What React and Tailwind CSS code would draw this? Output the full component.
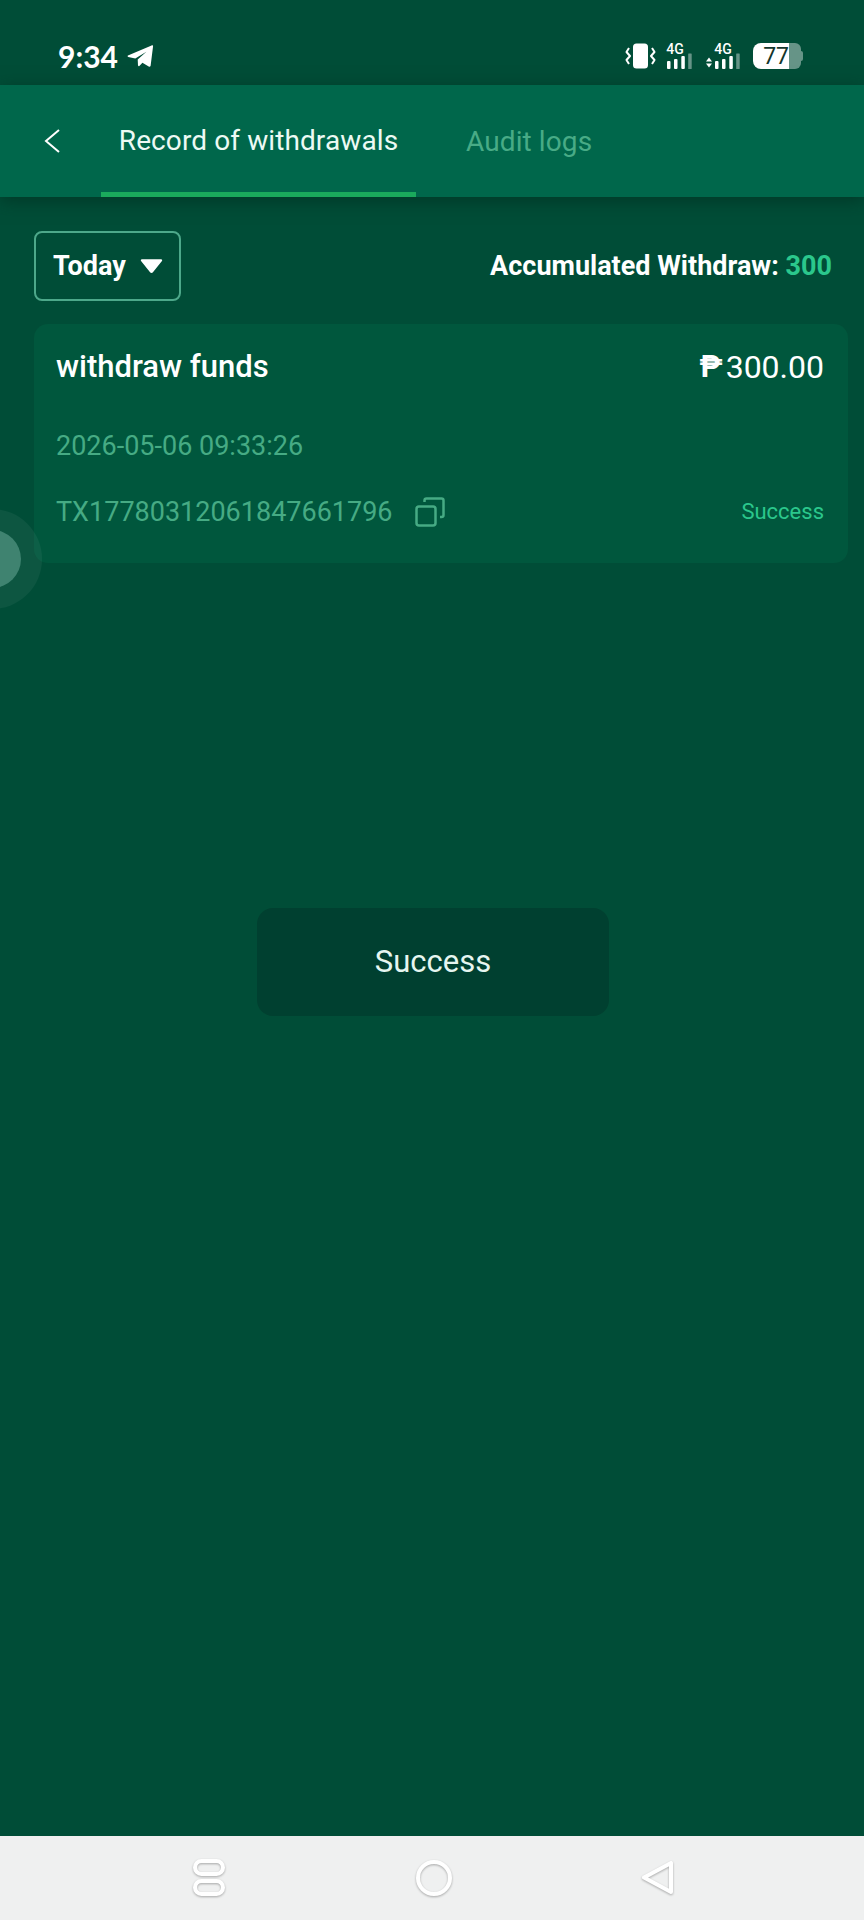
import React from "react";

function TelegramIcon() {
  return (
    <svg width="27" height="24" viewBox="0 0 28 24" fill="white">
      <path d="M1 11.500 25.500 1c.9-.4 1.700.2 1.500 1.200L24.500 22c-.2 1-1.100 1.400-2 .9l-6.500-3.800-3.200 3.200c-.6.500-1.400.2-1.400-.6l-.3-6 9-8.200-11.500 7L1.300 13c-.7-.3-.9-1.200-.3-1.500Z" />
    </svg>
  );
}

function VibrateIcon() {
  return (
    <svg width="31" height="26" viewBox="0 0 31 26" fill="none">
      <rect x="8" y="0.500" width="15" height="25" rx="3.500" fill="white" />
      <path d="M4 5 1.500 9 5 13 1.500 17 4 21M27 5l2.500 4-3.500 4 3.500 4-2.500 4" stroke="white" strokeWidth="2" strokeLinejoin="round" />
    </svg>
  );
}

function SignalIcon({ arrows }) {
  return (
    <div className="flex items-end gap-[3px] h-[26px]">
      {arrows && (
        <svg width="6" height="13" viewBox="0 0 6 13" fill="white">
          <path d="M0 5.500 3 1.500 6 5.500Z" />
          <path d="M0 7.500 3 11.500 6 7.500Z" />
        </svg>
      )}
      <div className="relative w-[25px] h-[26px]">
        <span className="absolute -left-[2px] top-0 w-[20px] text-center text-[14px] leading-[12px] font-medium text-white">
          4G
        </span>
        <svg className="absolute left-0 bottom-0" width="25" height="16" viewBox="0 0 25 16" fill="white">
          <rect x="0" y="8" width="3.500" height="8" rx="1" />
          <rect x="7" y="6" width="3.500" height="10" rx="1" />
          <rect x="14.300" y="3" width="3.500" height="13" rx="1" />
          <rect x="21.200" y="0.500" width="3.500" height="15.500" rx="0.500" fillOpacity="0.4" />
        </svg>
      </div>
    </div>
  );
}

function Battery() {
  return (
    <div className="flex items-center">
      <div className="flex items-center justify-end w-[36px] h-[26px] rounded-l-[8px] bg-white">
        <span className="text-[23px] leading-none text-[#12352b]">77</span>
      </div>
      <div className="w-[12px] h-[26px] bg-white/40 rounded-r-[6px]" />
      <div className="w-[2px] h-[10px] bg-white/40 rounded-r-sm" />
    </div>
  );
}

export default function App() {
  return (
    <div className="relative flex flex-col h-[1920px] w-[864px] overflow-hidden bg-[#004d37] font-['Roboto',sans-serif]">
      {/* status bar */}
      <div className="flex items-center justify-between h-[85px] pl-[58px] pr-[61px] pt-[27px]">
        <div className="flex items-center gap-[9px]">
          <span className="text-[30px] leading-none font-bold text-white font-['Lato']">9:34</span>
          <TelegramIcon />
        </div>
        <div className="flex items-center">
          <VibrateIcon />
          <div className="flex items-center gap-[14px] ml-[11px] mr-[13px]">
            <SignalIcon />
            <SignalIcon arrows />
          </div>
          <Battery />
        </div>
      </div>

      {/* tabs */}
      <div className="relative flex h-[112px] bg-[#00674b] shadow-[0_4px_16px_rgba(0,40,28,0.55)]">
        <button className="flex items-center justify-center w-[101px] pl-[1px] text-white">
          <svg width="18" height="26" viewBox="0 0 18 26" fill="none" stroke="white" strokeWidth="2">
            <path d="M17 2 4 13l13 11" />
          </svg>
        </button>
        <div className="flex items-center justify-center w-[315px] border-b-[5px] border-[#1aaa5c] pt-[5px] text-[28px] tracking-[0.1px] text-[#ecfaf4]">
          Record of withdrawals
        </div>
        <div className="flex items-center ml-[50px] pt-[1px] text-[28px] tracking-[0.1px] text-[#48ab86]">Audit logs</div>
      </div>

      {/* filter row */}
      <div className="flex items-center justify-between pl-[34px] pr-[32px] mt-[34px]">
        <button className="flex items-center gap-[14px] w-[147px] h-[70px] pl-[17px] rounded-[8px] border-2 border-[#4da88a] text-[27px] font-bold text-white">
          Today
          <svg width="23" height="16" viewBox="0 0 24 16" fill="white">
            <path d="M2 1h20c1 0 1.500 1 .9 1.800L13.500 14.500c-.7.9-2.300.9-3 0L1.100 2.800C.5 2 1 1 2 1Z" />
          </svg>
        </button>
        <div className="text-[27px] font-bold text-white">
          Accumulated Withdraw: <span className="text-[#2bc78c]">300</span>
        </div>
      </div>

      {/* record card */}
      <div className="flex flex-col h-[239px] ml-[34px] mr-[16px] mt-[23px] pl-[22px] pr-[24px] rounded-[14px] bg-[#00573d]">
        <div className="flex items-center justify-between mt-[24px] h-[38px]">
          <span className="text-[31px] font-medium text-white">withdraw funds</span>
          <span className="flex items-center text-[32px] text-white">
            <span className="mr-[3px] text-[31px] font-bold">₱</span>300.00
          </span>
        </div>
        <div className="mt-[44px] text-[27px] leading-[32px] text-[#46ab84]">2026-05-06 09:33:26</div>
        <div className="flex items-center justify-between mt-[33px]">
          <div className="flex items-center gap-[22px] text-[27px] leading-[32px] text-[#46ab84]">
            TX17780312061847661796
            <svg width="30" height="30" viewBox="0 0 30 30" fill="none" stroke="#46ab84" strokeWidth="2.500">
              <rect x="1.500" y="9.500" width="19" height="19" rx="2.500" />
              <path d="M9.500 5V3.500c0-1.100.9-2 2-2H26.500c1.100 0 2 .9 2 2V18c0 1.100-.9 2-2 2H25" />
            </svg>
          </div>
          <span className="text-[22px] text-[#2bc78c]">Success</span>
        </div>
      </div>

      {/* floating ball */}
      <div className="absolute left-[-58px] top-[509px] flex items-center justify-center w-[100px] h-[100px] rounded-full bg-white/5">
        <div className="w-[58px] h-[58px] rounded-full bg-[#3f8370]" />
      </div>

      {/* toast */}
      <div className="absolute left-[257px] top-[908px] flex items-center justify-center w-[352px] h-[108px] rounded-[16px] bg-[#004030] text-[31px] text-[#e6f6f0]">
        Success
      </div>

      {/* nav bar */}
      <div className="mt-auto flex items-center justify-between h-[84px] pl-[192px] pr-[189px] bg-[#eff0f0]">
        <svg width="34" height="40" viewBox="0 0 34 40" fill="none" stroke="white" strokeWidth="4" className="drop-shadow-[0_1px_1px_rgba(0,0,0,0.3)]">
          <rect x="3" y="3" width="28" height="13" rx="6.500" />
          <rect x="3" y="23" width="28" height="13" rx="6.500" />
        </svg>
        <svg width="38" height="38" viewBox="0 0 38 38" fill="none" stroke="white" strokeWidth="4" className="drop-shadow-[0_1px_1px_rgba(0,0,0,0.3)]">
          <circle cx="19" cy="19" r="16" />
        </svg>
        <svg width="34" height="38" viewBox="0 0 34 38" fill="none" stroke="white" strokeWidth="4" strokeLinejoin="round" className="drop-shadow-[0_1px_1px_rgba(0,0,0,0.3)]">
          <path d="M30 4v29L3 18.500Z" />
        </svg>
      </div>
    </div>
  );
}
